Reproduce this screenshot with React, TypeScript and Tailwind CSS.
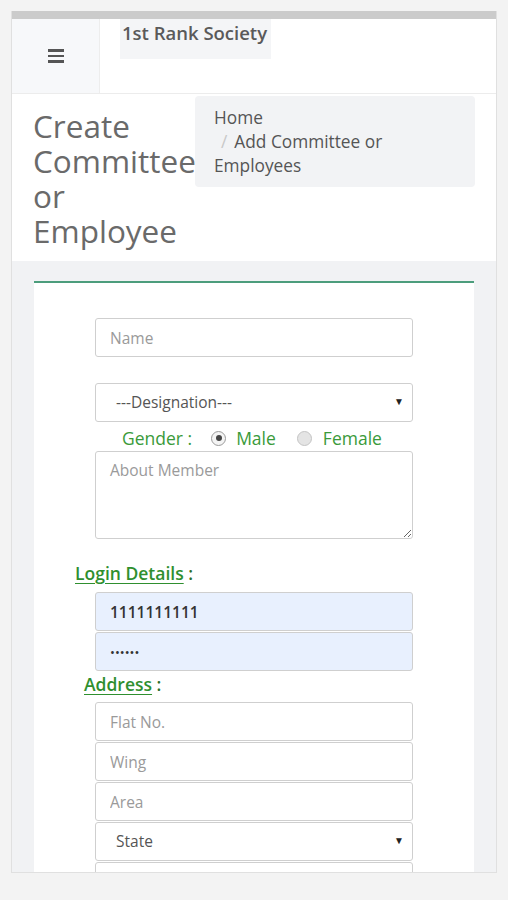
import React from 'react';

const field =
  "block w-[318px] h-[39px] border border-[#cfcfcf] rounded-[3px] bg-white px-[14px] text-[15.5px] text-[#555] placeholder:text-[#9a9a9a] outline-none";

const SelectBox = ({ label }: { label: string }) => (
  <div className="relative w-[318px] h-[39px] border border-[#cfcfcf] rounded-[3px] bg-white flex items-center pl-[20px] text-[15.5px] text-[#555]">
    <span>{label}</span>
    <span className="absolute right-[8px] top-[10px] text-[10px] text-[#222]">▼</span>
  </div>
);

const Radio = ({ checked }: { checked?: boolean }) => (
  <span
    className={
      "inline-flex items-center justify-center w-[15px] h-[15px] rounded-full border " +
      (checked ? "border-[#9a9a9a] bg-[#f4f4f4]" : "border-[#c4c4c4] bg-[#e4e4e4]")
    }
  >
    {checked && <span className="w-[6px] h-[6px] rounded-full bg-[#444]" />}
  </span>
);

export default function App() {
  return (
    <div className="min-h-[900px] bg-[#f3f3f3] pt-[11px] px-[11px] font-['Open_Sans',sans-serif]">
      <div className="h-[862px] overflow-hidden border-x border-b border-[#e0e0e0] bg-white flex flex-col">
        {/* top strip */}
        <div className="h-[8px] bg-[#cbcbcb] shrink-0" />

        {/* navbar */}
        <div className="h-[75px] shrink-0 flex border-b border-[#ececec]">
          <div className="w-[88px] bg-[#f7f8fa] border-r border-[#ededed] flex items-center justify-center">
            <div className="flex flex-col gap-[3px] w-[16px]">
              <span className="h-[2.5px] bg-[#555]" />
              <span className="h-[2.5px] bg-[#555]" />
              <span className="h-[2.5px] bg-[#555]" />
            </div>
          </div>
          <div className="flex-1 pl-[20px]">
            <div className="w-[151px] h-[40px] bg-[#f4f5f7] pl-[2px] pt-[1px] text-[18.5px] font-semibold text-[#5a5a5a] leading-[26px] whitespace-nowrap">
              1st Rank Society
            </div>
          </div>
        </div>

        {/* page header */}
        <div className="h-[167px] shrink-0 flex px-[21px] bg-white">
          <div className="w-[162px] shrink-0 pt-[14px] text-[31.5px] leading-[35px] text-[#6a6a6a] whitespace-nowrap">
            <div>Create</div>
            <div>Committee</div>
            <div>or</div>
            <div>Employee</div>
          </div>
          <div className="relative z-10 mt-[2px] w-[280px] h-[91px] bg-[#f2f3f5] rounded-[4px] px-[19px] pt-[10px] text-[17.3px] leading-[24px] text-[#555]">
            <div>Home</div>
            <div>
              <span className="text-[#c8c8c8] px-[7px]">/</span>Add Committee or
              Employees
            </div>
          </div>
        </div>

        {/* content */}
        <div className="flex-1 bg-[#f1f2f4] pt-[20px] px-[22px]">
          <div className="h-full bg-white border-t-2 border-[#4c9d7c] pt-[35px]">
            <div className="pl-[61px]">
              <input className={field} placeholder="Name" />
              <div className="mt-[26px]">
                <SelectBox label="---Designation---" />
              </div>
              <div className="h-[29px] flex items-center text-[17.5px] text-[#3a9a3a] pl-[27px] pt-[3px]">
                <span>Gender :</span>
                <span className="ml-[19px] mr-[10px] flex"><Radio checked /></span>
                <span>Male</span>
                <span className="ml-[21px] mr-[11px] flex"><Radio /></span>
                <span>Female</span>
              </div>
              <textarea
                className="block w-[318px] h-[88px] border border-[#cfcfcf] rounded-[3px] bg-white px-[14px] py-[7px] text-[15.5px] placeholder:text-[#9a9a9a] outline-none"
                placeholder="About Member"
              />
            </div>

            <div className="pl-[41px] mt-[21px] h-[32px] text-[17.5px] font-semibold text-[#2f8f2f]">
              <span className="underline underline-offset-[3px]">Login Details</span>
              <span className="text-[#2a6e2a]"> :</span>
            </div>
            <div className="pl-[61px] flex flex-col gap-[1px]">
              <input
                className="block w-[318px] h-[39px] border border-[#cfcfcf] rounded-[3px] bg-[#e8f0fe] px-[14px] text-[15.5px] font-semibold text-[#333] outline-none"
                defaultValue="1111111111"
                readOnly
              />
              <input
                type="password"
                className="block w-[318px] h-[39px] border border-[#cfcfcf] rounded-[3px] bg-[#e8f0fe] px-[14px] text-[13px] text-[#333] outline-none"
                defaultValue="123456"
                readOnly
              />
            </div>

            <div className="pl-[50px] h-[31px] leading-[26px] text-[17.5px] font-semibold text-[#2f8f2f]">
              <span className="underline underline-offset-[3px]">Address</span>
              <span className="text-[#2a6e2a]"> :</span>
            </div>
            <div className="pl-[61px] flex flex-col gap-[1px]">
              <input className={field} placeholder="Flat No." />
              <input className={field} placeholder="Wing" />
              <input className={field} placeholder="Area" />
              <SelectBox label="State" />
              <input className={field} placeholder="" />
            </div>
          </div>
        </div>
      </div>
    </div>
  );
}
